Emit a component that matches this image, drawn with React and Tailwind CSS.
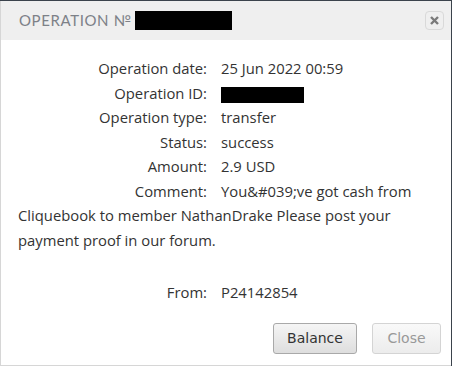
import React from 'react';

const rows = [
  ['Operation date:', '25 Jun 2022 00:59'],
  ['Operation ID:', null],
  ['Operation type:', 'transfer'],
  ['Status:', 'success'],
  ['Amount:', '2.9 USD'],
];

function Label({ children }) {
  return <span className="inline-block w-[189px] text-right mr-[14px]">{children}</span>;
}

export default function App() {
  return (
    <div className="w-[452px] h-[366px] bg-[#3b434c] overflow-hidden">
      <div className="flex flex-col w-[451px] h-[365px] mt-px bg-white border-l border-[#d6d6d6]">
        {/* title bar */}
        <div className="flex items-center h-[39px] bg-[#efefef] pl-[18px] pr-[7px]">
          <span className="font-['Lato',sans-serif] text-[15px] tracking-[0.04em] text-[#7d8188]">OPERATION №</span>
          <span className="inline-block w-[97px] h-[19px] bg-black ml-[3px]" />
          <button className="ml-auto flex items-center justify-center w-[19px] h-[19px] rounded-[4px] border border-[#d9d9d9] bg-[#efefef]">
            <svg width="9" height="9" viewBox="0 0 9 9">
              <path d="M1 1 L8 8 M8 1 L1 8" stroke="#7a7a7a" strokeWidth="2.4" />
            </svg>
          </button>
        </div>
        {/* content */}
        <div className="flex-1 pl-[17px] pr-[20px] pt-[16px] font-['Open_Sans',sans-serif] text-[14.8px] leading-[24.5px] text-[#333]">
          {rows.map(([l, v]) => (
            <div key={l}>
              <Label>{l}</Label>
              {v === null ? <span className="inline-block align-middle w-[83px] h-[16px] bg-black" /> : v}
            </div>
          ))}
          <div>
            <Label>Comment:</Label>
            You&amp;#039;ve got cash from Cliquebook to member NathanDrake Please post your payment proof in our forum.
          </div>
          <div className="h-[28px]" />
          <div>
            <Label>From:</Label>P24142854
          </div>
        </div>
        {/* buttons */}
        <div className="flex justify-end gap-[15px] pr-[10px] pb-[11px] font-['DejaVu_Sans',sans-serif] text-[14px]">
          <button className="w-[84px] h-[31px] rounded-[3px] border border-[#a9a9a9] bg-gradient-to-b from-[#f5f5f5] to-[#dedede] text-[#333]">Balance</button>
          <button className="w-[69px] h-[31px] rounded-[3px] border border-[#d4d4d4] bg-gradient-to-b from-[#f9f9f9] to-[#ececec] text-[#999]">Close</button>
        </div>
        <div className="h-px bg-[#d6d6d6]" />
      </div>
    </div>
  );
}
